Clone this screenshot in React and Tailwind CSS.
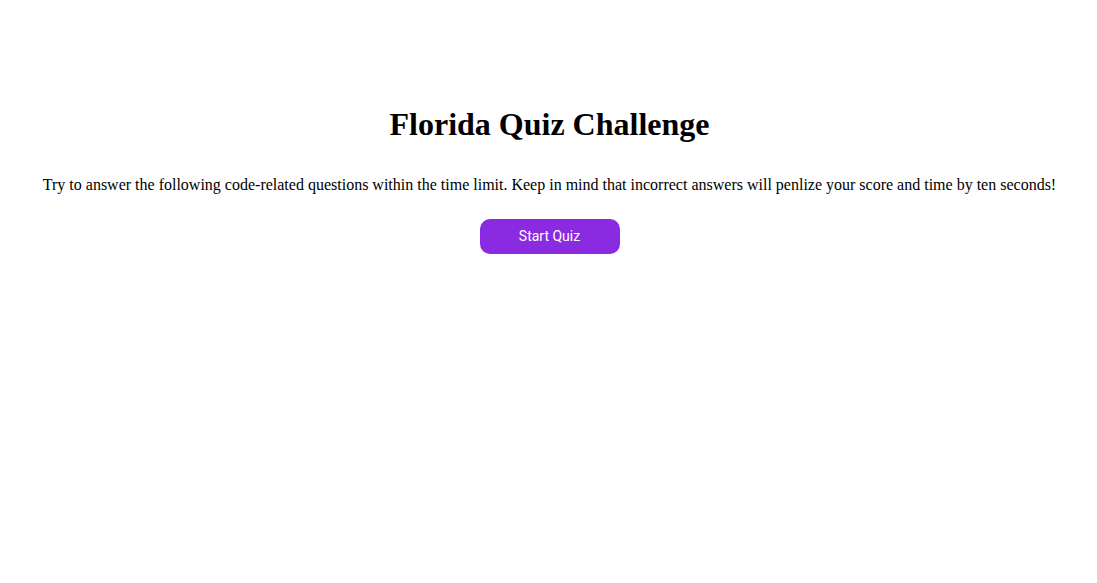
export default function App() {
  return (
    <div className="min-h-screen bg-white text-black" style={{ fontFamily: '"Liberation Serif", "Times New Roman", serif' }}>
      <div className="flex flex-col items-center pt-[106px] pl-[18px] pr-[16px] text-center">
        <h1 className="text-[32px] font-bold leading-[37px]">Florida Quiz Challenge</h1>
        <p className="mt-[33px] text-[16px] leading-[18px]">
          Try to answer the following code-related questions within the time limit. Keep in mind that incorrect answers will penlize your score and time by ten seconds!
        </p>
        <button className="mt-[25px] w-[140px] h-[35px] rounded-[10px] bg-[#8a2be2] text-white text-[14px] font-['Roboto',sans-serif]">
          Start Quiz
        </button>
      </div>
    </div>
  );
}
